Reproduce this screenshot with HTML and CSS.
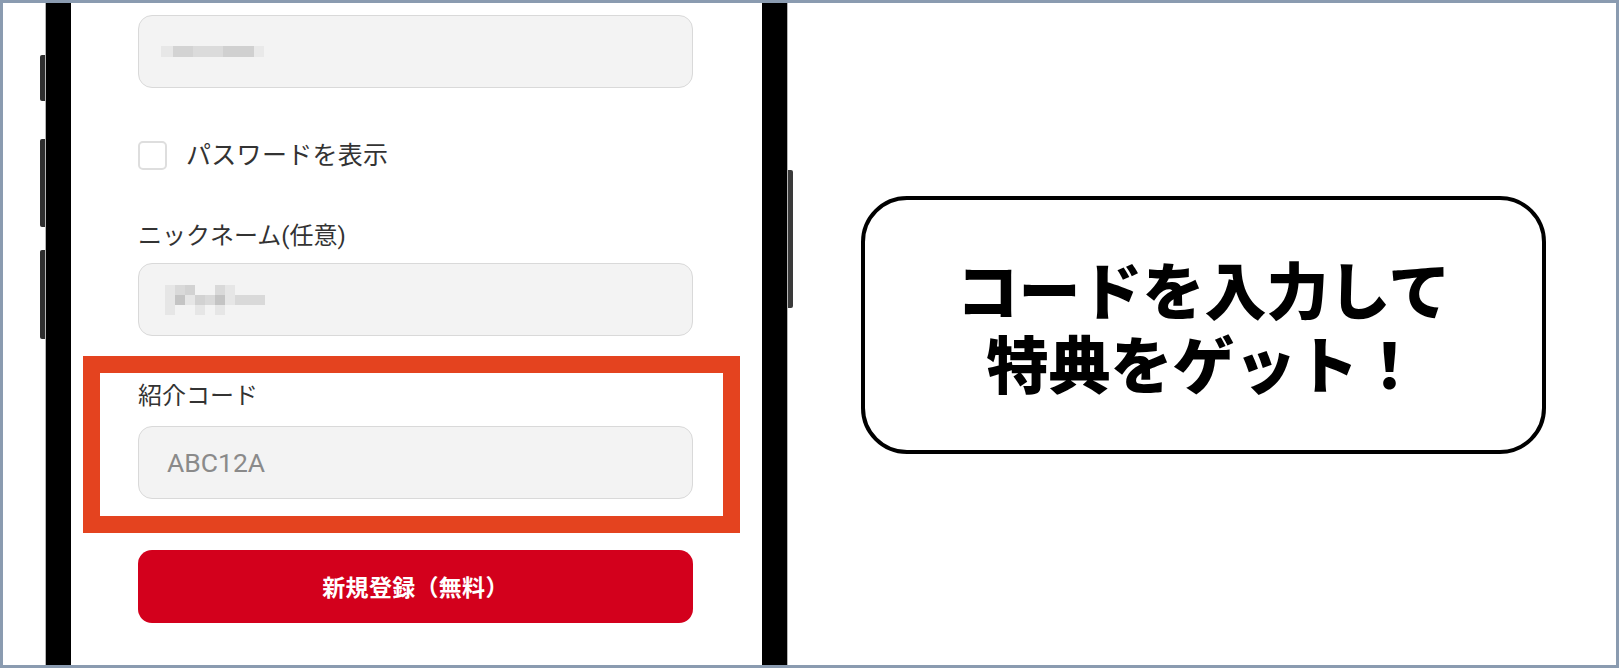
FILE: index.html
```html
<!doctype html>
<html lang="ja">
<head>
    <meta charset="UTF-8">
    <title>紹介コード</title>
    <link rel="stylesheet" href="styles.css">
</head>
<body>
<div class="shot">
    <!--左側のボタン-->
    <div class="rail rail-left">
        <span class="key key-mute"></span>
        <span class="key key-vol"></span>
        <span class="key key-vol2"></span>
    </div>

    <div class="phone">
        <div class="bezel">
            <div class="screen">
                <div class="input">
                    <span class="mosaic mosaic-pass"></span>
                </div>

                <label class="check">
                    <span class="box"></span>
                    <span class="check-text">パスワードを表示</span>
                </label>

                <p class="label label-nick">ニックネーム(任意)</p>
                <div class="input">
                    <span class="mosaic mosaic-nick">
                        <i class="c1"></i><i class="c2"></i><i class="c3"></i><i class="c0"></i><i class="c0"></i><i class="c2"></i><i class="c1"></i><i class="c0"></i><i class="c0"></i><i class="c0"></i>
                        <i class="c1"></i><i class="c4"></i><i class="c1"></i><i class="c3"></i><i class="c2"></i><i class="c4"></i><i class="c1"></i><i class="c2"></i><i class="c2"></i><i class="c2"></i>
                        <i class="c1"></i><i class="c0"></i><i class="c0"></i><i class="c1"></i><i class="c0"></i><i class="c1"></i><i class="c0"></i><i class="c0"></i><i class="c0"></i><i class="c0"></i>
                    </span>
                </div>

                <!--注目の枠-->
                <div class="mark">
                    <p class="label">紹介コード</p>
                    <div class="input">
                        <span class="code">ABC12A</span>
                    </div>
                </div>

                <a href="javascript:;" class="btn">新規登録（無料）</a>
            </div>
        </div>
    </div>

    <div class="rail rail-right">
        <span class="key key-power"></span>
    </div>

    <div class="side">
        <div class="callout">
            <p>コードを入力して<br>特典をゲット！</p>
        </div>
    </div>
</div>
</body>
</html>
```

FILE: styles.css
```css
html, body, p {
    margin: 0;
    padding: 0;
}

a {
    text-decoration: none;
}

body {
    background: #fff;
    font-family: "Roboto", "Noto Sans CJK JP", sans-serif;
    color: #333;
}

.shot {
    width: 1619px;
    height: 668px;
    box-sizing: border-box;
    border: 3px solid #8a9bb0;
    background: #fff;
    display: flex;
    overflow: hidden;
}

/* 側面ボタン */
.rail {
    width: 5px;
    display: flex;
    flex-direction: column;
}

.rail-left {
    margin-left: 37px;
}

.key {
    display: block;
    width: 5px;
    background: #2e2e2e;
    border-radius: 2px 0 0 2px;
}

.key-mute {
    margin-top: 52px;
    height: 46px;
}

.key-vol {
    margin-top: 38px;
    height: 88px;
}

.key-vol2 {
    margin-top: 23px;
    height: 89px;
}

.rail-right .key {
    border-radius: 0 2px 2px 0;
    background: #3a3a3a;
}

.key-power {
    margin-top: 167px;
    height: 138px;
}

.phone {
    padding: 0 1px;
    background: #b4b4b4;
}

.bezel {
    height: 100%;
    border-left: 25px solid #000;
    border-right: 25px solid #000;
    background: #fff;
}

.screen {
    width: 691px;
    box-sizing: border-box;
    padding: 12px 69px 0 67px;
}

/* 入力欄 */
.input {
    height: 73px;
    box-sizing: border-box;
    border: 1px solid #d9d9d9;
    border-radius: 14px;
    background: #f3f3f3;
    display: flex;
    align-items: center;
    padding-left: 28px;
}

.mosaic-pass {
    display: block;
    width: 103px;
    height: 11px;
    margin-left: -6px;
    background: linear-gradient(to right,
        #e7e7e7 0, #e7e7e7 12px,
        #d3d3d3 12px, #d3d3d3 32px,
        #dbdbdb 32px, #dbdbdb 62px,
        #d0d0d0 62px, #d0d0d0 93px,
        #e9e9e9 93px, #e9e9e9 103px);
}

.mosaic-nick {
    display: grid;
    grid-template-columns: repeat(10, 10px);
    grid-auto-rows: 10px;
    margin-left: -2px;
}

.mosaic-nick i {
    display: block;
}

.c0 { background: #f3f3f3; }
.c1 { background: #e6e6e6; }
.c2 { background: #d9d9d9; }
.c3 { background: #d2d2d2; }
.c4 { background: #c4c4c4; }

.check {
    display: flex;
    align-items: center;
    margin-top: 53px;
    height: 29px;
}

.box {
    width: 29px;
    height: 29px;
    box-sizing: border-box;
    border: 2px solid #dedede;
    border-radius: 5px;
    background: #fff;
}

.check-text {
    margin-left: 19px;
    font-size: 25px;
    letter-spacing: 0.3px;
    line-height: 32px;
    color: #333;
}

.label {
    font-size: 24px;
    line-height: 32px;
    color: #333;
    margin-bottom: 11px;
}

.label-nick {
    margin-top: 50px;
}

.mark {
    margin: 20px -47px 0 -55px;
    border: 17px solid #e4431f;
    padding: 7px 30px 17px 38px;
}

.mark .label {
    margin-bottom: 14px;
}

.code {
    font-size: 26.5px;
    color: #8a8a8a;
    font-family: "Roboto", sans-serif;
}

.btn {
    display: block;
    margin-top: 17px;
    height: 73px;
    line-height: 73px;
    border-radius: 14px;
    background: #d3001c;
    color: #fff;
    text-align: center;
    font-size: 23px;
    font-weight: bold;
    letter-spacing: 0.3px;
    font-family: "Noto Sans CJK JP", sans-serif;
}

/* 右側の吹き出し */
.side {
    flex: 1;
    display: flex;
    align-items: center;
    justify-content: center;
    padding: 0 2px 18px 0;
}

.callout {
    width: 685px;
    height: 258px;
    box-sizing: border-box;
    border: 4px solid #000;
    border-radius: 46px;
    display: flex;
    flex-direction: column;
    justify-content: center;
    align-items: center;
    text-align: center;
    font-family: "Noto Sans CJK JP", sans-serif;
    font-weight: 900;
    font-size: 62px;
    line-height: 74px;
    color: #000;
}
```
